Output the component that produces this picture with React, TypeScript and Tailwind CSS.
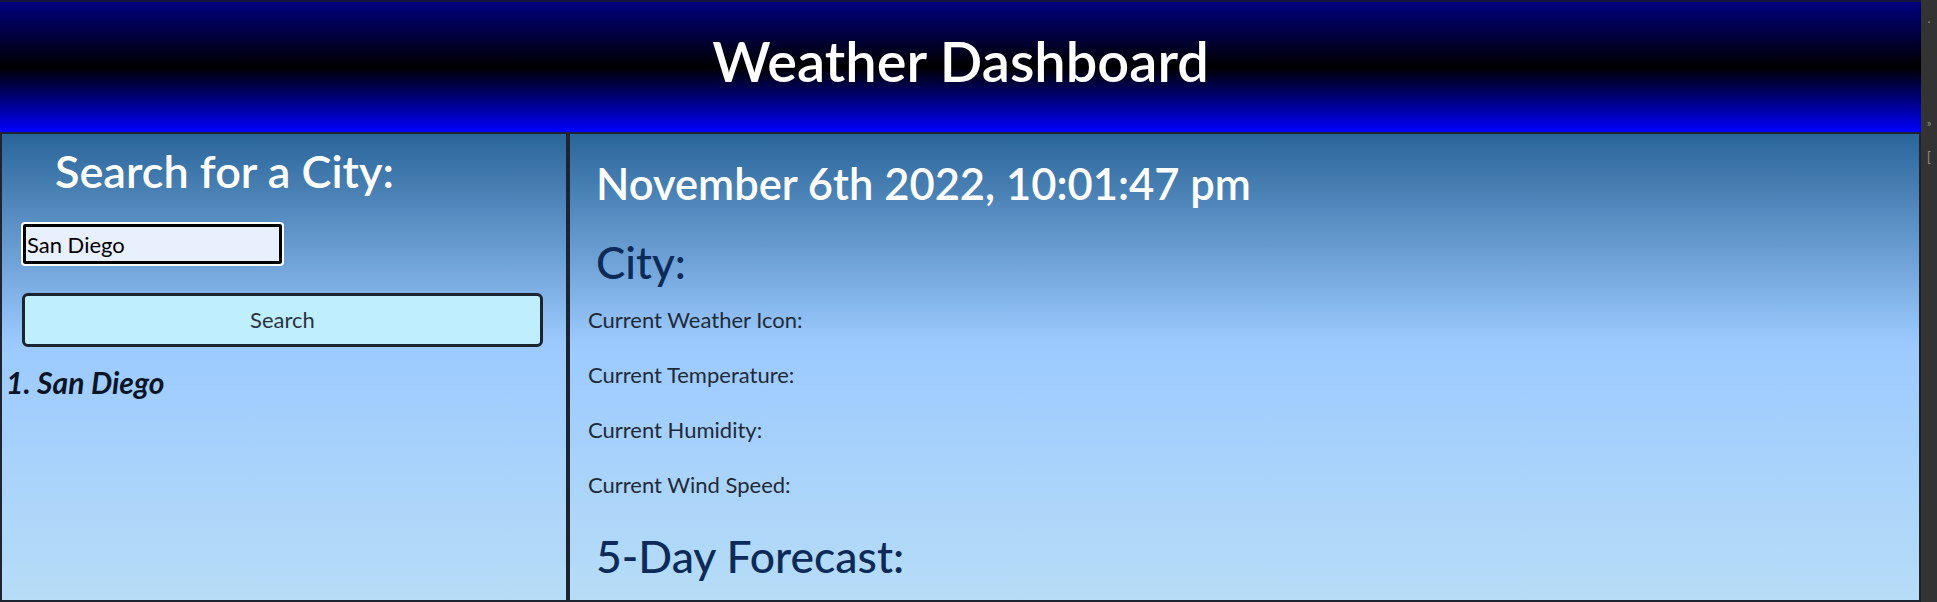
export default function App() {
  const labels = [
    "Current Weather Icon:",
    "Current Temperature:",
    "Current Humidity:",
    "Current Wind Speed:",
  ];
  return (
    <div className="flex h-[602px] w-[1937px] overflow-hidden bg-[#333333] font-['Lato',sans-serif]">
      <div className="flex w-[1921px] flex-col">
        <header className="flex h-[132px] shrink-0 items-center justify-center border-t-2 border-[#14143a] bg-[linear-gradient(to_bottom,#000080,#000000,#0000ff)] pb-[12px]">
          <h1 className="text-[56px] font-semibold leading-none text-white">Weather Dashboard</h1>
        </header>
        <div className="flex min-h-0 flex-1">
          <aside className="flex w-[568px] shrink-0 flex-col border-2 border-[#1b2430] bg-[linear-gradient(to_bottom,#2a6599,#9ccaff_45%,#b6dcf6)]">
            <h2 className="mt-[15px] pl-[53px] text-[45px] font-semibold leading-none text-white">
              Search for a City:
            </h2>
            <div className="ml-[19px] mt-[28px] h-[44px] w-[263px] rounded-[4px] border-2 border-white">
              <input
                readOnly
                value="San Diego"
                className="h-full w-full rounded-[3px] border-[3px] border-black bg-[#e8f0fe] pl-[1px] text-[22px] leading-none text-black outline-none"
              />
            </div>
            <button className="ml-[20px] mt-[27px] h-[54px] w-[521px] rounded-[6px] border-[3px] border-[#1b2430] bg-[#bfeefe] text-[22px] leading-none text-[#2b3340]">
              Search
            </button>
            <p className="ml-[4px] mt-[20px] text-[30px] font-bold italic leading-none text-[#0b1526]">
              1. San Diego
            </p>
          </aside>
          <main className="flex flex-1 flex-col border-2 border-[#1b2430] bg-[linear-gradient(to_bottom,#2a6599,#9ccaff_45%,#b6dcf6)]">
            <h2 className="mt-[28px] pl-[26px] text-[43.5px] font-semibold leading-none text-white">
              November 6th 2022, 10:01:47 pm
            </h2>
            <h3 className="mt-[34px] pl-[26px] text-[44px] font-medium leading-none text-[#0c2b58]">City:</h3>
            <div className="mt-[25px] flex flex-col gap-[33px] pl-[18px]">
              {labels.map((l) => (
                <p key={l} className="text-[22px] leading-none text-[#1f2a37]">
                  {l}
                </p>
              ))}
            </div>
            <h3 className="mt-[38px] pl-[26px] text-[44.5px] font-medium leading-none text-[#0c2b58]">
              5-Day Forecast:
            </h3>
          </main>
        </div>
      </div>
      <div className="flex flex-1 flex-col items-center bg-[#333333] pt-[16px] text-[11px] leading-none text-[#8a8a8a]">
        <span>·</span>
        <span className="mt-[90px]">»</span>
        <span className="mt-[22px] text-[14px]">[</span>
      </div>
    </div>
  );
}
